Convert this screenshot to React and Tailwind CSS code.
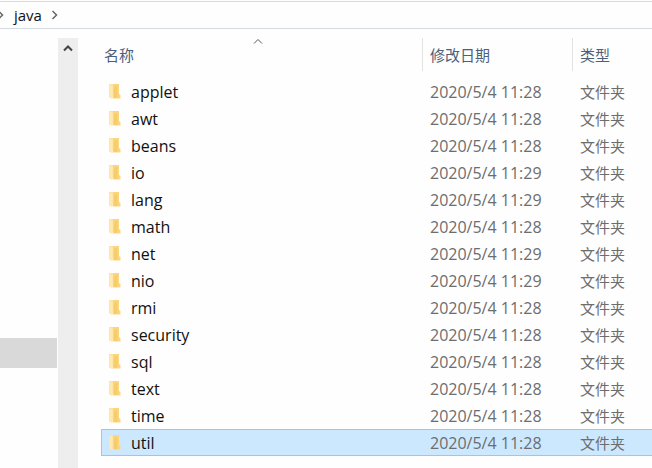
import React, { useState } from "react";

const folders = [
  { name: "applet", modified: "2020/5/4 11:28" },
  { name: "awt", modified: "2020/5/4 11:28" },
  { name: "beans", modified: "2020/5/4 11:28" },
  { name: "io", modified: "2020/5/4 11:29" },
  { name: "lang", modified: "2020/5/4 11:29" },
  { name: "math", modified: "2020/5/4 11:28" },
  { name: "net", modified: "2020/5/4 11:29" },
  { name: "nio", modified: "2020/5/4 11:29" },
  { name: "rmi", modified: "2020/5/4 11:28" },
  { name: "security", modified: "2020/5/4 11:28" },
  { name: "sql", modified: "2020/5/4 11:28" },
  { name: "text", modified: "2020/5/4 11:28" },
  { name: "time", modified: "2020/5/4 11:28" },
  { name: "util", modified: "2020/5/4 11:28" },
];

const Chevron = ({ d, className }) => (
  <svg viewBox="0 0 10 10" fill="none" stroke="currentColor" className={className}>
    <path d={d} />
  </svg>
);

const FolderIcon = () => (
  <svg viewBox="0 0 14 18" className="h-[18px] w-[14px] shrink-0">
    <path d="M1 1h9v13.5H1z" fill="#fde2a0" />
    <path d="M5 1h6v10l1.5 1v3.5H5z" fill="#fbd67e" />
    <path d="M1.5 1.5 4.5 3v13.5l-3-2z" fill="#ffe9b0" />
    <path d="M7 3h2.5v12H6V6z" fill="#f7cd6b" />
  </svg>
);

const AddressBar = () => (
  <nav className="mt-px flex h-7 items-center border-y border-[#d5dbe3] text-[#666]">
    <Chevron d="M2.5 1 6.5 5 2.5 9" className="-ml-1 h-[10px] w-[10px] stroke-[1.5]" />
    <a href="#java" className="ml-2 text-[15px] leading-5 text-[#111]">
      java
    </a>
    <Chevron d="M2.5 1 6.5 5 2.5 9" className="ml-2 h-[10px] w-[10px] stroke-[1.5]" />
  </nav>
);

const Sidebar = () => (
  <aside className="flex w-[78px] shrink-0">
    <div className="grow pt-[300px]">
      <div className="mr-px h-[30px] bg-[#d9d9d9]" />
    </div>
    <div className="w-5 bg-[#eeeeee]">
      <button aria-label="Scroll up" className="flex h-5 w-5 items-center justify-center text-[#444]">
        <Chevron d="M1 7.5 5 3.5 9 7.5" className="h-[10px] w-[10px] stroke-2" />
      </button>
    </div>
  </aside>
);

const App = () => {
  const [selected, setSelected] = useState("util");

  return (
    <div className="flex min-h-screen flex-col overflow-hidden bg-[#fefefe] font-['Open_Sans','Noto_Sans_CJK_SC',sans-serif]">
      <AddressBar />

      <div className="flex grow pt-[9px]">
        <Sidebar />

        <main className="ml-[23px] grow">
          <table className="w-full table-fixed border-separate border-spacing-0 text-left text-[15px] leading-5">
            <thead className="text-[#4c607a]">
              <tr className="h-[33px]">
                <th className="relative p-0 pl-[3px] font-normal">
                  名称
                  <Chevron
                    d="M1 5.5 5 1.5 9 5.5"
                    className="absolute top-0 left-[49%] h-[10px] w-[10px] -translate-x-1/2 text-[#555]"
                  />
                </th>
                <th className="w-[150px] border-l border-[#e2e2e2] p-0 pl-[7px] font-normal">
                  修改日期
                </th>
                <th className="w-[80px] border-l border-[#e2e2e2] p-0 pl-[7px] font-normal">
                  类型
                </th>
              </tr>
            </thead>
            <tbody className="text-[#6d6d6d] before:block before:h-[7px]">
              {folders.map((folder) => (
                <tr
                  key={folder.name}
                  onClick={() => setSelected(folder.name)}
                  className={
                    folder.name === selected
                      ? "h-[27px] bg-[#cce8ff] *:border-y *:border-[#9ac9e6] *:first:border-l"
                      : "h-[27px] *:border-y *:border-transparent *:first:border-l"
                  }
                >
                  <td className="p-0 pl-[6px]">
                    <div className="flex items-center gap-[9px] text-base leading-5 text-[#111]">
                      <FolderIcon />
                      {folder.name}
                    </div>
                  </td>
                  <td className="p-0 pl-2 text-base leading-5">{folder.modified}</td>
                  <td className="p-0 pl-2">文件夹</td>
                </tr>
              ))}
            </tbody>
          </table>
        </main>
      </div>
    </div>
  );
};

export default App;
